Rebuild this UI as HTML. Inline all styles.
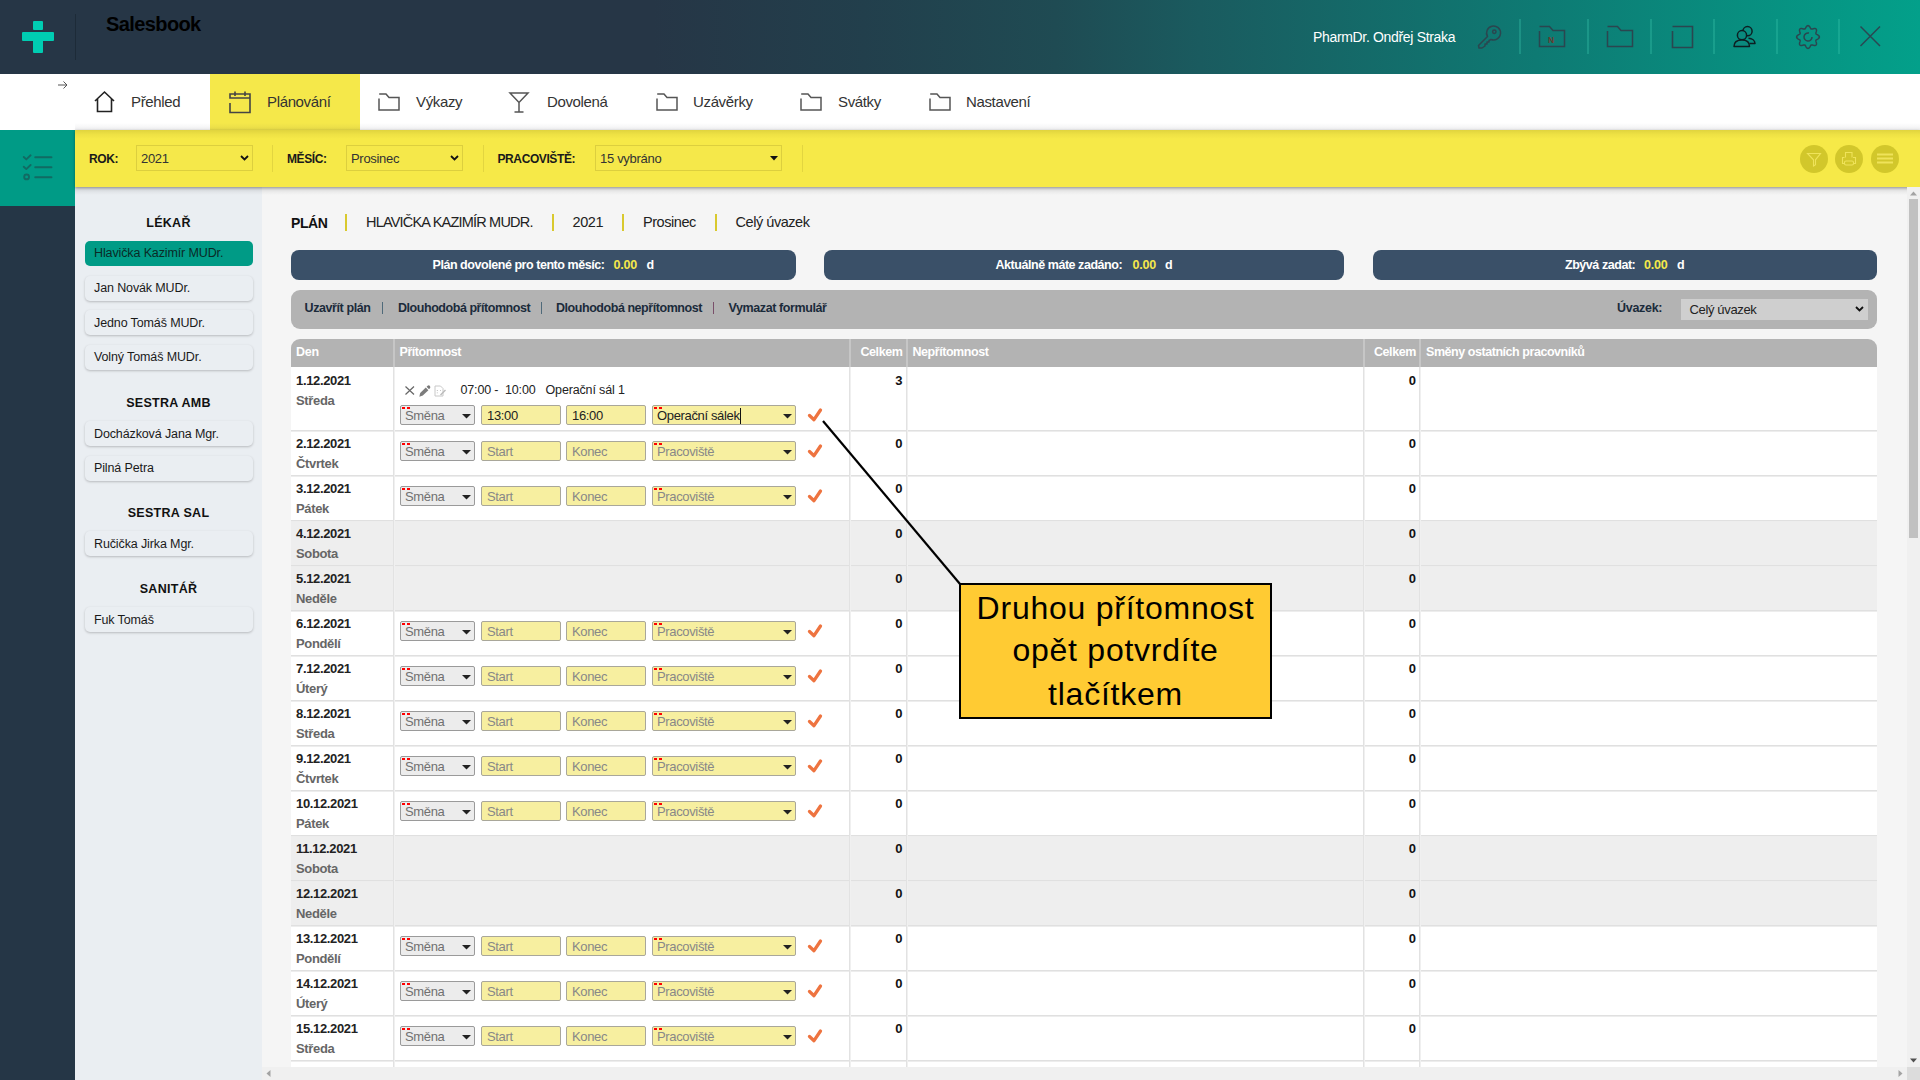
<!DOCTYPE html>
<html><head><meta charset="utf-8"><style>
*{box-sizing:border-box;margin:0;padding:0}
html,body{width:1920px;height:1080px;overflow:hidden;background:#f5f5f5;font-family:"Liberation Sans",sans-serif;color:#222}
.a{position:absolute}
.t{position:absolute;white-space:pre}
svg{position:absolute;overflow:visible}
</style></head><body>
<div class="a" style="left:0;top:0;width:1920px;height:74px;background:linear-gradient(to right,#263646 0%,#263646 34%,#223f4c 45%,#1f4b53 55%,#1a5b5f 62.5%,#0e7a73 80%,#03a08a 100%)"></div>
<div class="a" style="left:33px;top:20.5px;width:9.5px;height:9.5px;border-radius:1px;background:#00cdb2"></div>
<div class="a" style="left:22px;top:32px;width:31.8px;height:9.3px;border-radius:1px;background:#00cdb2"></div>
<div class="a" style="left:33px;top:40px;width:9.5px;height:12.5px;border-radius:0 0 1px 1px;background:#00cdb2"></div>
<div class="a" style="left:75px;top:14px;width:1px;height:46px;background:#1d2b38"></div>
<div class="t" style="left:106px;top:14.07px;font-size:20px;line-height:20px;font-weight:700;color:#000;letter-spacing:-0.6px;">Salesbook</div>
<div class="t" style="left:1313px;top:29.65px;font-size:14px;line-height:14px;font-weight:400;color:#fff;letter-spacing:-0.33px;">PharmDr. Ondřej Straka</div>
<div class="a" style="left:1519px;top:19px;width:2px;height:35px;background:rgba(60,200,175,.32)"></div>
<div class="a" style="left:1587px;top:19px;width:2px;height:35px;background:rgba(60,200,175,.32)"></div>
<div class="a" style="left:1650px;top:19px;width:2px;height:35px;background:rgba(60,200,175,.32)"></div>
<div class="a" style="left:1713px;top:19px;width:2px;height:35px;background:rgba(60,200,175,.32)"></div>
<div class="a" style="left:1776px;top:19px;width:2px;height:35px;background:rgba(60,200,175,.32)"></div>
<div class="a" style="left:1838px;top:19px;width:2px;height:35px;background:rgba(60,200,175,.32)"></div>
<svg style="left:1476px;top:24px" width="26" height="26" viewBox="0 0 26 26" fill="none" stroke="#2b464f" stroke-width="1.5" stroke-linejoin="round"><path d="M11.5 12.5 A7 7 0 1 1 15 15.5 L13 16.5 L13 18 L11 18 L11 20 L9 20 L9 22 L6 24 L3 24 L2.5 21.5 L11.5 12.5 Z"/><circle cx="18.3" cy="7.8" r="1.7"/></svg>
<svg style="left:1538px;top:25px" width="28" height="23" viewBox="0 0 28 23" fill="none" stroke="#2b464f" stroke-width="1.5"><path d="M1.5 6 V21.5 H26.5 V5.5 H15 L11.5 1.5 H1.5"/><text x="10" y="17.5" font-size="8.5" font-family="Liberation Sans" font-weight="700" fill="#6b3a2e" stroke="none">N</text></svg>
<svg style="left:1606px;top:25px" width="28" height="23" viewBox="0 0 28 23" fill="none" stroke="#2b464f" stroke-width="1.5"><path d="M1.5 6 V21.5 H26.5 V5.5 H15 L11.5 1.5 H1.5"/></svg>
<svg style="left:1671px;top:25px" width="23" height="24" viewBox="0 0 23 24" fill="none" stroke="#2b464f" stroke-width="1.6"><path d="M1.5 6 V22.5 H21.5 V1.5 H1.5"/></svg>
<svg style="left:1733px;top:25px" width="24" height="23" viewBox="0 0 24 23" fill="none" stroke="#0d1f22" stroke-width="1.5" stroke-linejoin="round"><circle cx="14.5" cy="6.2" r="4.6"/><path d="M15.5 13.3 C19 13.5 22 15.5 22 18.5 L16.5 18.5"/><circle cx="9" cy="10.2" r="4.6" fill="#0a8a7e"/><path d="M1 21.5 C1 17.5 3.5 15 9 15 C14 15 16.5 17.5 16.5 21.5 Z" fill="#0a8a7e"/></svg>
<svg style="left:1796px;top:25px" width="24" height="24" viewBox="0 0 24 24" fill="none" stroke="#2b464f" stroke-width="1.5"><path d="M23.40 12.00 L23.34 12.40 L23.16 12.78 L22.88 13.14 L22.51 13.48 L22.09 13.78 L21.64 14.05 L21.19 14.29 L20.78 14.52 L20.43 14.74 L20.16 14.97 L19.98 15.22 L19.88 15.51 L19.88 15.84 L19.94 16.22 L20.05 16.65 L20.19 17.12 L20.33 17.62 L20.44 18.13 L20.50 18.64 L20.48 19.12 L20.38 19.55 L20.19 19.91 L19.91 20.19 L19.55 20.38 L19.12 20.48 L18.64 20.50 L18.13 20.44 L17.62 20.33 L17.12 20.19 L16.65 20.05 L16.22 19.94 L15.84 19.88 L15.51 19.88 L15.22 19.98 L14.97 20.16 L14.74 20.43 L14.52 20.78 L14.29 21.19 L14.05 21.64 L13.78 22.09 L13.48 22.51 L13.14 22.88 L12.78 23.16 L12.40 23.34 L12.00 23.40 L11.60 23.34 L11.22 23.16 L10.86 22.88 L10.52 22.51 L10.22 22.09 L9.95 21.64 L9.71 21.19 L9.48 20.78 L9.26 20.43 L9.03 20.16 L8.78 19.98 L8.49 19.88 L8.16 19.88 L7.78 19.94 L7.35 20.05 L6.88 20.19 L6.38 20.33 L5.87 20.44 L5.36 20.50 L4.88 20.48 L4.45 20.38 L4.09 20.19 L3.81 19.91 L3.62 19.55 L3.52 19.12 L3.50 18.64 L3.56 18.13 L3.67 17.62 L3.81 17.12 L3.95 16.65 L4.06 16.22 L4.12 15.84 L4.12 15.51 L4.02 15.22 L3.84 14.97 L3.57 14.74 L3.22 14.52 L2.81 14.29 L2.36 14.05 L1.91 13.78 L1.49 13.48 L1.12 13.14 L0.84 12.78 L0.66 12.40 L0.60 12.00 L0.66 11.60 L0.84 11.22 L1.12 10.86 L1.49 10.52 L1.91 10.22 L2.36 9.95 L2.81 9.71 L3.22 9.48 L3.57 9.26 L3.84 9.03 L4.02 8.78 L4.12 8.49 L4.12 8.16 L4.06 7.78 L3.95 7.35 L3.81 6.88 L3.67 6.38 L3.56 5.87 L3.50 5.36 L3.52 4.88 L3.62 4.45 L3.81 4.09 L4.09 3.81 L4.45 3.62 L4.88 3.52 L5.36 3.50 L5.87 3.56 L6.38 3.67 L6.88 3.81 L7.35 3.95 L7.78 4.06 L8.16 4.12 L8.49 4.12 L8.78 4.02 L9.03 3.84 L9.26 3.57 L9.48 3.22 L9.71 2.81 L9.95 2.36 L10.22 1.91 L10.52 1.49 L10.86 1.12 L11.22 0.84 L11.60 0.66 L12.00 0.60 L12.40 0.66 L12.78 0.84 L13.14 1.12 L13.48 1.49 L13.78 1.91 L14.05 2.36 L14.29 2.81 L14.52 3.22 L14.74 3.57 L14.97 3.84 L15.22 4.02 L15.51 4.12 L15.84 4.12 L16.22 4.06 L16.65 3.95 L17.12 3.81 L17.62 3.67 L18.13 3.56 L18.64 3.50 L19.12 3.52 L19.55 3.62 L19.91 3.81 L20.19 4.09 L20.38 4.45 L20.48 4.88 L20.50 5.36 L20.44 5.87 L20.33 6.38 L20.19 6.88 L20.05 7.35 L19.94 7.78 L19.88 8.16 L19.88 8.49 L19.98 8.78 L20.16 9.03 L20.43 9.26 L20.78 9.48 L21.19 9.71 L21.64 9.95 L22.09 10.22 L22.51 10.52 L22.88 10.86 L23.16 11.22 L23.34 11.60 L23.40 12.00 Z"/><path d="M16 12 A4 4 0 1 1 13 8.1"/></svg>
<svg style="left:1860px;top:26px" width="21" height="21" viewBox="0 0 21 21" fill="none" stroke="#2a4852" stroke-width="1.5"><path d="M0.5 0.5 L20 20 M20 0.5 L0.5 20"/></svg>
<div class="a" style="left:0;top:74px;width:1920px;height:56px;background:#fff"></div>
<div class="a" style="left:210px;top:74px;width:150px;height:56px;background:#f5e84a"></div>
<svg style="left:57px;top:80px" width="12" height="10" viewBox="0 0 12 10" fill="none" stroke="#555" stroke-width="1"><path d="M1 5 H10 M6.5 1.5 L10 5 L6.5 8.5"/></svg>
<div class="a" style="left:75px;top:123px;width:1845px;height:7px;background:linear-gradient(rgba(0,0,0,0),rgba(40,40,60,.07))"></div>
<svg style="left:94px;top:91px" width="21" height="22" viewBox="0 0 21 22" fill="none" stroke="#222" stroke-width="1.6"><path d="M1 10 L10.5 1 L20 10 M3.5 8 V20.5 H17.5 V8"/></svg>
<div class="t" style="left:131px;top:94.00px;font-size:15px;line-height:15px;font-weight:400;color:#333;letter-spacing:-0.35px;">Přehled</div>
<svg style="left:229px;top:91px" width="22" height="22" viewBox="0 0 22 22" fill="none" stroke="#444" stroke-width="1.6"><path d="M1 12 V21.5 H21 V3 H1 V7 H21 M6 0.5 V5 M16 0.5 V5"/></svg>
<div class="t" style="left:267px;top:94.00px;font-size:15px;line-height:15px;font-weight:400;color:#333;letter-spacing:-0.35px;">Plánování</div>
<svg style="left:378px;top:93px" width="22" height="18" viewBox="0 0 22 18" fill="none" stroke="#555" stroke-width="1.5"><path d="M1 5.5 V17 H21 V4.5 H11 L8 1 H1.2"/></svg>
<div class="t" style="left:416px;top:94.00px;font-size:15px;line-height:15px;font-weight:400;color:#333;letter-spacing:-0.35px;">Výkazy</div>
<svg style="left:509px;top:92px" width="20" height="21" viewBox="0 0 20 21" fill="none" stroke="#555" stroke-width="1.5"><path d="M1 1 H19 L10 10.5 Z M10 10.5 V20 M5.5 20 H14.5"/></svg>
<div class="t" style="left:547px;top:94.00px;font-size:15px;line-height:15px;font-weight:400;color:#333;letter-spacing:-0.35px;">Dovolená</div>
<svg style="left:656px;top:93px" width="22" height="18" viewBox="0 0 22 18" fill="none" stroke="#555" stroke-width="1.5"><path d="M1 5.5 V17 H21 V4.5 H11 L8 1 H1.2"/></svg>
<div class="t" style="left:693px;top:94.00px;font-size:15px;line-height:15px;font-weight:400;color:#333;letter-spacing:-0.35px;">Uzávěrky</div>
<svg style="left:800px;top:93px" width="22" height="18" viewBox="0 0 22 18" fill="none" stroke="#555" stroke-width="1.5"><path d="M1 5.5 V17 H21 V4.5 H11 L8 1 H1.2"/></svg>
<div class="t" style="left:838px;top:94.00px;font-size:15px;line-height:15px;font-weight:400;color:#333;letter-spacing:-0.35px;">Svátky</div>
<svg style="left:929px;top:93px" width="22" height="18" viewBox="0 0 22 18" fill="none" stroke="#555" stroke-width="1.5"><path d="M1 5.5 V17 H21 V4.5 H11 L8 1 H1.2"/></svg>
<div class="t" style="left:966px;top:94.00px;font-size:15px;line-height:15px;font-weight:400;color:#333;letter-spacing:-0.35px;">Nastavení</div>
<div class="a" style="left:0;top:130px;width:75px;height:950px;background:#253646"></div>
<div class="a" style="left:0;top:130px;width:75px;height:76px;background:#009b86"></div>
<svg style="left:20px;top:150px" width="34" height="32" viewBox="0 0 34 32" fill="none" stroke="#116b63" stroke-width="1.9" stroke-linecap="round" stroke-linejoin="round"><path d="M3.75 7 L6.3 9.4 L10.6 5.3 M15.2 7.3 H31.5 M3.75 16.7 L6.3 19.1 L10.6 15 M15.2 17.25 H31.5 M15.2 27.2 H31.5"/><circle cx="6.6" cy="26.9" r="2.4"/></svg>
<div class="a" style="left:75px;top:187px;width:187px;height:893px;background:#eaeef2"></div>
<div class="a" style="left:75px;top:187px;width:1845px;height:8px;background:linear-gradient(rgba(0,0,0,.10),rgba(0,0,0,0))"></div>
<div class="a" style="left:75px;top:130px;width:1845px;height:57px;background:#f6e948;box-shadow:0 1px 3px rgba(0,0,0,.35)"></div>
<div class="a" style="left:75px;top:130px;width:1845px;height:9px;background:linear-gradient(rgba(90,80,0,.14),rgba(90,80,0,.05) 50%,rgba(0,0,0,0))"></div>
<div class="t" style="left:89px;top:152.84px;font-size:12px;line-height:12px;font-weight:700;color:#1a1a1a;letter-spacing:-0.4px;">ROK:</div>
<div class="a" style="left:136px;top:145px;width:117px;height:26px;border:1px solid #dccf3e;background:#f5e84a"></div>
<div class="t" style="left:141px;top:152.00px;font-size:13px;line-height:13px;font-weight:400;color:#333;letter-spacing:-0.3px;">2021</div>
<svg style="left:240px;top:155px" width="9" height="6" viewBox="0 0 9 6" fill="none" stroke="#111" stroke-width="1.8"><path d="M1 1 L4.5 4.5 L8 1"/></svg>
<div class="a" style="left:272px;top:145px;width:1px;height:27px;background:#e2d540"></div>
<div class="t" style="left:287px;top:152.84px;font-size:12px;line-height:12px;font-weight:700;color:#1a1a1a;letter-spacing:-0.4px;">MĚSÍC:</div>
<div class="a" style="left:346px;top:145px;width:117px;height:26px;border:1px solid #dccf3e;background:#f5e84a"></div>
<div class="t" style="left:351px;top:152.00px;font-size:13px;line-height:13px;font-weight:400;color:#333;letter-spacing:-0.3px;">Prosinec</div>
<svg style="left:450px;top:155px" width="9" height="6" viewBox="0 0 9 6" fill="none" stroke="#111" stroke-width="1.8"><path d="M1 1 L4.5 4.5 L8 1"/></svg>
<div class="a" style="left:483px;top:145px;width:1px;height:27px;background:#e2d540"></div>
<div class="t" style="left:497.5px;top:152.84px;font-size:12px;line-height:12px;font-weight:700;color:#1a1a1a;letter-spacing:-0.4px;">PRACOVIŠTĚ:</div>
<div class="a" style="left:595px;top:145px;width:187px;height:26px;border:1px solid #dccf3e;background:#f5e84a"></div>
<div class="t" style="left:600px;top:152.00px;font-size:13px;line-height:13px;font-weight:400;color:#333;letter-spacing:-0.3px;">15 vybráno</div>
<svg style="left:770px;top:156px" width="8" height="5" viewBox="0 0 8 5"><path d="M0 0 H8 L4 4.5 Z" fill="#111"/></svg>
<div class="a" style="left:802px;top:145px;width:1px;height:27px;background:#e2d540"></div>
<div class="a" style="left:1799.5px;top:144.5px;width:28.5px;height:28.5px;border-radius:50%;background:#d2c72b"></div>
<div class="a" style="left:1834.5px;top:144.5px;width:28.5px;height:28.5px;border-radius:50%;background:#d2c72b"></div>
<div class="a" style="left:1870.5px;top:144.5px;width:28.5px;height:28.5px;border-radius:50%;background:#d2c72b"></div>
<svg style="left:1806px;top:152px" width="16" height="15" viewBox="0 0 16 15" fill="none" stroke="#efe35a" stroke-width="1.1"><path d="M1.5 1.5 H14.5 L9.5 7.8 V12.8 L7.5 14 V7.8 Z"/></svg>
<svg style="left:1841px;top:151px" width="16" height="16" viewBox="0 0 16 16" fill="none" stroke="#efe35a" stroke-width="1.1"><path d="M4.5 6.5 V1.5 H11 V6.5 M3.5 6.5 H1.5 V12.5 H3.5 M12 6.5 H14.5 V12.5 H12"/><rect x="3.5" y="10" width="9" height="4" rx="1.5"/></svg>
<svg style="left:1876px;top:152px" width="18" height="14" viewBox="0 0 18 14" fill="none" stroke="#efe35a" stroke-width="1.8"><path d="M1 2.5 H17 M1 6.5 H17 M1 10.5 H17"/></svg>
<div class="t" style="left:168.5px;top:216.92px;font-size:12.5px;line-height:12.5px;font-weight:700;color:#111;letter-spacing:0.3px;transform:translateX(-50%);">LÉKAŘ</div>
<div class="a" style="left:85px;top:241px;width:168px;height:25px;border-radius:5px;background:#009b86;"></div>
<div class="t" style="left:94px;top:246.92px;font-size:12.5px;line-height:12.5px;font-weight:400;color:#0a2a26;letter-spacing:-0.12px;">Hlavička Kazimír MUDr.</div>
<div class="a" style="left:85px;top:275.5px;width:168px;height:25px;border-radius:5px;background:#eaeef2;box-shadow:0 1px 2.5px rgba(0,0,0,.22);"></div>
<div class="t" style="left:94px;top:282.42px;font-size:12.5px;line-height:12.5px;font-weight:400;color:#1a1a1a;letter-spacing:-0.12px;">Jan Novák MUDr.</div>
<div class="a" style="left:85px;top:310px;width:168px;height:25px;border-radius:5px;background:#eaeef2;box-shadow:0 1px 2.5px rgba(0,0,0,.22);"></div>
<div class="t" style="left:94px;top:316.92px;font-size:12.5px;line-height:12.5px;font-weight:400;color:#1a1a1a;letter-spacing:-0.12px;">Jedno Tomáš MUDr.</div>
<div class="a" style="left:85px;top:344.5px;width:168px;height:25px;border-radius:5px;background:#eaeef2;box-shadow:0 1px 2.5px rgba(0,0,0,.22);"></div>
<div class="t" style="left:94px;top:351.42px;font-size:12.5px;line-height:12.5px;font-weight:400;color:#1a1a1a;letter-spacing:-0.12px;">Volný Tomáš MUDr.</div>
<div class="t" style="left:168.5px;top:397.42px;font-size:12.5px;line-height:12.5px;font-weight:700;color:#111;letter-spacing:0.3px;transform:translateX(-50%);">SESTRA AMB</div>
<div class="a" style="left:85px;top:421px;width:168px;height:25px;border-radius:5px;background:#eaeef2;box-shadow:0 1px 2.5px rgba(0,0,0,.22);"></div>
<div class="t" style="left:94px;top:427.92px;font-size:12.5px;line-height:12.5px;font-weight:400;color:#1a1a1a;letter-spacing:-0.12px;">Docházková Jana Mgr.</div>
<div class="a" style="left:85px;top:455.5px;width:168px;height:25px;border-radius:5px;background:#eaeef2;box-shadow:0 1px 2.5px rgba(0,0,0,.22);"></div>
<div class="t" style="left:94px;top:462.42px;font-size:12.5px;line-height:12.5px;font-weight:400;color:#1a1a1a;letter-spacing:-0.12px;">Pilná Petra</div>
<div class="t" style="left:168.5px;top:507.42px;font-size:12.5px;line-height:12.5px;font-weight:700;color:#111;letter-spacing:0.3px;transform:translateX(-50%);">SESTRA SAL</div>
<div class="a" style="left:85px;top:531px;width:168px;height:25px;border-radius:5px;background:#eaeef2;box-shadow:0 1px 2.5px rgba(0,0,0,.22);"></div>
<div class="t" style="left:94px;top:537.92px;font-size:12.5px;line-height:12.5px;font-weight:400;color:#1a1a1a;letter-spacing:-0.12px;">Ručička Jirka Mgr.</div>
<div class="t" style="left:168.5px;top:582.92px;font-size:12.5px;line-height:12.5px;font-weight:700;color:#111;letter-spacing:0.3px;transform:translateX(-50%);">SANITÁŘ</div>
<div class="a" style="left:85px;top:607px;width:168px;height:25px;border-radius:5px;background:#eaeef2;box-shadow:0 1px 2.5px rgba(0,0,0,.22);"></div>
<div class="t" style="left:94px;top:613.92px;font-size:12.5px;line-height:12.5px;font-weight:400;color:#1a1a1a;letter-spacing:-0.12px;">Fuk Tomáš</div>
<div class="t" style="left:291px;top:215.65px;font-size:14px;line-height:14px;font-weight:700;color:#111;letter-spacing:-0.45px;">PLÁN</div>
<div class="a" style="left:345px;top:214px;width:2px;height:17px;background:#d9c92e"></div>
<div class="a" style="left:552px;top:214px;width:2px;height:17px;background:#d9c92e"></div>
<div class="a" style="left:622px;top:214px;width:2px;height:17px;background:#d9c92e"></div>
<div class="a" style="left:715px;top:214px;width:2px;height:17px;background:#d9c92e"></div>
<div class="t" style="left:366px;top:215.23px;font-size:14.5px;line-height:14.5px;font-weight:400;color:#222;letter-spacing:-0.8px;">HLAVIČKA KAZIMÍR MUDR.</div>
<div class="t" style="left:572.5px;top:215.23px;font-size:14.5px;line-height:14.5px;font-weight:400;color:#222;letter-spacing:-0.4px;">2021</div>
<div class="t" style="left:643px;top:215.23px;font-size:14.5px;line-height:14.5px;font-weight:400;color:#222;letter-spacing:-0.45px;">Prosinec</div>
<div class="t" style="left:735.5px;top:215.23px;font-size:14.5px;line-height:14.5px;font-weight:400;color:#222;letter-spacing:-0.45px;">Celý úvazek</div>
<div class="a" style="left:291px;top:250px;width:505px;height:30px;border-radius:8px;background:#3a5068"></div>
<div class="t" style="left:432.5px;top:259.12px;font-size:12.5px;line-height:12.5px;font-weight:700;color:#fff;letter-spacing:-0.45px;">Plán dovolené pro tento měsíc:</div>
<div class="t" style="left:613.5px;top:259.12px;font-size:12.5px;line-height:12.5px;font-weight:700;color:#f5e84a;letter-spacing:-0.2px;">0.00</div>
<div class="t" style="left:646.5px;top:259.12px;font-size:12.5px;line-height:12.5px;font-weight:700;color:#fff;">d</div>
<div class="a" style="left:823.5px;top:250px;width:520.5px;height:30px;border-radius:8px;background:#3a5068"></div>
<div class="t" style="left:995.5px;top:259.12px;font-size:12.5px;line-height:12.5px;font-weight:700;color:#fff;letter-spacing:-0.45px;">Aktuálně máte zadáno:</div>
<div class="t" style="left:1132.5px;top:259.12px;font-size:12.5px;line-height:12.5px;font-weight:700;color:#f5e84a;letter-spacing:-0.2px;">0.00</div>
<div class="t" style="left:1165px;top:259.12px;font-size:12.5px;line-height:12.5px;font-weight:700;color:#fff;">d</div>
<div class="a" style="left:1372.5px;top:250px;width:504.5px;height:30px;border-radius:8px;background:#3a5068"></div>
<div class="t" style="left:1565px;top:259.12px;font-size:12.5px;line-height:12.5px;font-weight:700;color:#fff;letter-spacing:-0.45px;">Zbývá zadat:</div>
<div class="t" style="left:1644px;top:259.12px;font-size:12.5px;line-height:12.5px;font-weight:700;color:#f5e84a;letter-spacing:-0.2px;">0.00</div>
<div class="t" style="left:1677px;top:259.12px;font-size:12.5px;line-height:12.5px;font-weight:700;color:#fff;">d</div>
<div class="a" style="left:291px;top:290px;width:1586px;height:39px;border-radius:9px;background:#b3b3b3"></div>
<div class="t" style="left:304.5px;top:302.42px;font-size:12.5px;line-height:12.5px;font-weight:700;color:#1b2b3b;letter-spacing:-0.4px;">Uzavřít plán</div>
<div class="t" style="left:398px;top:302.42px;font-size:12.5px;line-height:12.5px;font-weight:700;color:#1b2b3b;letter-spacing:-0.45px;">Dlouhodobá přítomnost</div>
<div class="t" style="left:556px;top:302.42px;font-size:12.5px;line-height:12.5px;font-weight:700;color:#1b2b3b;letter-spacing:-0.45px;">Dlouhodobá nepřítomnost</div>
<div class="t" style="left:728.5px;top:302.42px;font-size:12.5px;line-height:12.5px;font-weight:700;color:#1b2b3b;letter-spacing:-0.4px;">Vymazat formulář</div>
<div class="a" style="left:382px;top:302px;width:1px;height:12px;background:#4f6a7a"></div>
<div class="a" style="left:540.5px;top:302px;width:1px;height:12px;background:#4f6a7a"></div>
<div class="a" style="left:712.5px;top:302px;width:1px;height:12px;background:#7a4f6a"></div>
<div class="t" style="left:1617px;top:301.92px;font-size:12.5px;line-height:12.5px;font-weight:700;color:#1b2b3b;letter-spacing:-0.3px;">Úvazek:</div>
<div class="a" style="left:1681px;top:299px;width:187px;height:21px;background:#cfcfcf"></div>
<div class="t" style="left:1689.5px;top:302.70px;font-size:13px;line-height:13px;font-weight:400;color:#222;letter-spacing:-0.35px;">Celý úvazek</div>
<svg style="left:1855px;top:306px" width="9" height="6" viewBox="0 0 9 6" fill="none" stroke="#111" stroke-width="1.8"><path d="M1 1 L4.5 4.5 L8 1"/></svg>
<div class="a" style="left:291px;top:339px;width:1586px;height:28px;border-radius:9px 9px 0 0;background:#b3b3b3"></div>
<div class="a" style="left:393px;top:339px;width:2px;height:28px;background:#c6c6c6"></div>
<div class="a" style="left:849px;top:339px;width:2px;height:28px;background:#c6c6c6"></div>
<div class="a" style="left:906px;top:339px;width:2px;height:28px;background:#c6c6c6"></div>
<div class="a" style="left:1363px;top:339px;width:2px;height:28px;background:#c6c6c6"></div>
<div class="a" style="left:1419px;top:339px;width:2px;height:28px;background:#c6c6c6"></div>
<div class="t" style="left:296px;top:346.42px;font-size:12.5px;line-height:12.5px;font-weight:700;color:#fff;letter-spacing:-0.3px;">Den</div>
<div class="t" style="left:399.5px;top:346.42px;font-size:12.5px;line-height:12.5px;font-weight:700;color:#fff;letter-spacing:-0.45px;">Přítomnost</div>
<div class="t" style="right:1017.5px;top:346.42px;font-size:12.5px;line-height:12.5px;font-weight:700;color:#fff;letter-spacing:-0.4px;">Celkem</div>
<div class="t" style="left:912.5px;top:346.42px;font-size:12.5px;line-height:12.5px;font-weight:700;color:#fff;letter-spacing:-0.45px;">Nepřítomnost</div>
<div class="t" style="right:504px;top:346.42px;font-size:12.5px;line-height:12.5px;font-weight:700;color:#fff;letter-spacing:-0.4px;">Celkem</div>
<div class="t" style="left:1426px;top:346.42px;font-size:12.5px;line-height:12.5px;font-weight:700;color:#fff;letter-spacing:-0.45px;">Směny ostatních pracovníků</div>
<div class="a" style="left:291px;top:367px;width:1586px;height:63px;background:#ffffff"></div>
<div class="a" style="left:291px;top:430px;width:1586px;height:45px;background:#ffffff"></div>
<div class="a" style="left:291px;top:475px;width:1586px;height:45px;background:#ffffff"></div>
<div class="a" style="left:291px;top:520px;width:1586px;height:45px;background:#eeeeee"></div>
<div class="a" style="left:291px;top:565px;width:1586px;height:45px;background:#eeeeee"></div>
<div class="a" style="left:291px;top:610px;width:1586px;height:45px;background:#ffffff"></div>
<div class="a" style="left:291px;top:655px;width:1586px;height:45px;background:#ffffff"></div>
<div class="a" style="left:291px;top:700px;width:1586px;height:45px;background:#ffffff"></div>
<div class="a" style="left:291px;top:745px;width:1586px;height:45px;background:#ffffff"></div>
<div class="a" style="left:291px;top:790px;width:1586px;height:45px;background:#ffffff"></div>
<div class="a" style="left:291px;top:835px;width:1586px;height:45px;background:#eeeeee"></div>
<div class="a" style="left:291px;top:880px;width:1586px;height:45px;background:#eeeeee"></div>
<div class="a" style="left:291px;top:925px;width:1586px;height:45px;background:#ffffff"></div>
<div class="a" style="left:291px;top:970px;width:1586px;height:45px;background:#ffffff"></div>
<div class="a" style="left:291px;top:1015px;width:1586px;height:45px;background:#ffffff"></div>
<div class="a" style="left:291px;top:1060px;width:1586px;height:7px;background:#ffffff"></div>
<div class="a" style="left:291px;top:430px;width:1586px;height:1px;background:#e0e0e0"></div><div class="a" style="left:291px;top:431px;width:1586px;height:1px;background:#ededed"></div>
<div class="a" style="left:291px;top:475px;width:1586px;height:1px;background:#e0e0e0"></div><div class="a" style="left:291px;top:476px;width:1586px;height:1px;background:#ededed"></div>
<div class="a" style="left:291px;top:520px;width:1586px;height:1px;background:#e0e0e0"></div><div class="a" style="left:291px;top:521px;width:1586px;height:1px;background:#ededed"></div>
<div class="a" style="left:291px;top:565px;width:1586px;height:1px;background:#e0e0e0"></div><div class="a" style="left:291px;top:566px;width:1586px;height:1px;background:#ededed"></div>
<div class="a" style="left:291px;top:610px;width:1586px;height:1px;background:#e0e0e0"></div><div class="a" style="left:291px;top:611px;width:1586px;height:1px;background:#ededed"></div>
<div class="a" style="left:291px;top:655px;width:1586px;height:1px;background:#e0e0e0"></div><div class="a" style="left:291px;top:656px;width:1586px;height:1px;background:#ededed"></div>
<div class="a" style="left:291px;top:700px;width:1586px;height:1px;background:#e0e0e0"></div><div class="a" style="left:291px;top:701px;width:1586px;height:1px;background:#ededed"></div>
<div class="a" style="left:291px;top:745px;width:1586px;height:1px;background:#e0e0e0"></div><div class="a" style="left:291px;top:746px;width:1586px;height:1px;background:#ededed"></div>
<div class="a" style="left:291px;top:790px;width:1586px;height:1px;background:#e0e0e0"></div><div class="a" style="left:291px;top:791px;width:1586px;height:1px;background:#ededed"></div>
<div class="a" style="left:291px;top:835px;width:1586px;height:1px;background:#e0e0e0"></div><div class="a" style="left:291px;top:836px;width:1586px;height:1px;background:#ededed"></div>
<div class="a" style="left:291px;top:880px;width:1586px;height:1px;background:#e0e0e0"></div><div class="a" style="left:291px;top:881px;width:1586px;height:1px;background:#ededed"></div>
<div class="a" style="left:291px;top:925px;width:1586px;height:1px;background:#e0e0e0"></div><div class="a" style="left:291px;top:926px;width:1586px;height:1px;background:#ededed"></div>
<div class="a" style="left:291px;top:970px;width:1586px;height:1px;background:#e0e0e0"></div><div class="a" style="left:291px;top:971px;width:1586px;height:1px;background:#ededed"></div>
<div class="a" style="left:291px;top:1015px;width:1586px;height:1px;background:#e0e0e0"></div><div class="a" style="left:291px;top:1016px;width:1586px;height:1px;background:#ededed"></div>
<div class="a" style="left:291px;top:1060px;width:1586px;height:1px;background:#e0e0e0"></div><div class="a" style="left:291px;top:1061px;width:1586px;height:1px;background:#ededed"></div>
<div class="a" style="left:393px;top:367px;width:1px;height:700px;background:#e2e2e2"></div><div class="a" style="left:394px;top:367px;width:1px;height:700px;background:#f0f0f0"></div>
<div class="a" style="left:849px;top:367px;width:1px;height:700px;background:#e2e2e2"></div><div class="a" style="left:850px;top:367px;width:1px;height:700px;background:#f0f0f0"></div>
<div class="a" style="left:906px;top:367px;width:1px;height:700px;background:#e2e2e2"></div><div class="a" style="left:907px;top:367px;width:1px;height:700px;background:#f0f0f0"></div>
<div class="a" style="left:1363px;top:367px;width:1px;height:700px;background:#e2e2e2"></div><div class="a" style="left:1364px;top:367px;width:1px;height:700px;background:#f0f0f0"></div>
<div class="a" style="left:1419px;top:367px;width:1px;height:700px;background:#e2e2e2"></div><div class="a" style="left:1420px;top:367px;width:1px;height:700px;background:#f0f0f0"></div>
<div class="t" style="left:296px;top:374.10px;font-size:13px;line-height:13px;font-weight:700;color:#222;letter-spacing:-0.35px;">1.12.2021</div>
<div class="t" style="left:296px;top:393.50px;font-size:13px;line-height:13px;font-weight:700;color:#666;letter-spacing:-0.35px;">Středa</div>
<div class="t" style="right:1017.5px;top:373.70px;font-size:13px;line-height:13px;font-weight:700;color:#111;">3</div>
<div class="t" style="right:504px;top:373.70px;font-size:13px;line-height:13px;font-weight:700;color:#111;">0</div>
<svg style="left:405px;top:386px" width="10" height="9" viewBox="0 0 10 9" fill="none" stroke="#666" stroke-width="1.2"><path d="M0.5 0.5 L9 8.5 M9 0.5 L0.5 8.5"/></svg>
<svg style="left:419px;top:385px" width="12" height="12" viewBox="0 0 12 12"><path d="M0.3 11.8 L1.2 8 L6.8 2.6 L9.4 5.2 L3.8 10.6 Z" fill="#7c7c7c"/><path d="M7.6 1.8 L8.6 0.8 Q9.8 -0.2 10.9 0.9 Q11.9 2 10.9 3.2 L10 4.2 Z" fill="#777"/></svg>
<svg style="left:434px;top:385px" width="13" height="12" viewBox="0 0 13 12" fill="none" stroke="#c8c8c8" stroke-width="1"><path d="M1 1 H6.5 L9 3.5 V11 H1 Z M2.8 5.5 H4 M6 5.5 H7 M2.8 7.8 H3.8"/><path d="M6.5 10 L11.5 5" stroke="#bbb" stroke-width="1.4"/></svg>
<div class="t" style="left:460.5px;top:383.92px;font-size:12.5px;line-height:12.5px;font-weight:400;color:#222;letter-spacing:-0.15px;">07:00 -  10:00   Operační sál 1</div>
<div class="a" style="left:400px;top:405px;width:75px;height:20px;border:1px solid #9a9a9a;border-radius:2px;background:#ececec"></div>
<div class="a" style="left:402px;top:407px;width:3px;height:2px;background:#f00"></div><div class="a" style="left:407px;top:407px;width:3px;height:2px;background:#f00"></div>
<div class="t" style="left:405px;top:408.50px;font-size:13px;line-height:13px;font-weight:400;color:#707070;letter-spacing:-0.35px;">Směna</div>
<svg style="left:462px;top:414px" width="9" height="5" viewBox="0 0 9 5"><path d="M0 0 H9 L4.5 4.5 Z" fill="#222"/></svg>
<div class="a" style="left:481px;top:405px;width:80px;height:20px;border:1px solid #a9a79a;border-radius:2px;background:#f7efa0"></div>
<div class="t" style="left:487px;top:408.50px;font-size:13px;line-height:13px;font-weight:400;color:#222;letter-spacing:-0.35px;">13:00</div>
<div class="a" style="left:566px;top:405px;width:80px;height:20px;border:1px solid #a9a79a;border-radius:2px;background:#f7efa0"></div>
<div class="t" style="left:572px;top:408.50px;font-size:13px;line-height:13px;font-weight:400;color:#222;letter-spacing:-0.35px;">16:00</div>
<div class="a" style="left:652px;top:405px;width:144px;height:20px;border:1px solid #a9a79a;border-radius:2px;background:#f7efa0"></div>
<div class="a" style="left:654px;top:407px;width:3px;height:2px;background:#f00"></div><div class="a" style="left:659px;top:407px;width:3px;height:2px;background:#f00"></div>
<div class="t" style="left:657px;top:408.50px;font-size:13px;line-height:13px;font-weight:400;color:#222;letter-spacing:-0.35px;">Operační sálek</div>
<div class="a" style="left:740px;top:408px;width:1px;height:16px;background:#111"></div>
<svg style="left:783px;top:414px" width="9" height="5" viewBox="0 0 9 5"><path d="M0 0 H9 L4.5 4.5 Z" fill="#222"/></svg>
<svg style="left:805px;top:408px" width="20" height="16" viewBox="0 0 20 16" fill="none" stroke="#ee7440" stroke-width="3.3" stroke-linecap="round" stroke-linejoin="round"><path d="M4.5 7.5 L9 11.7 L15.5 2"/></svg>
<div class="t" style="left:296px;top:437.10px;font-size:13px;line-height:13px;font-weight:700;color:#222;letter-spacing:-0.35px;">2.12.2021</div>
<div class="t" style="left:296px;top:456.50px;font-size:13px;line-height:13px;font-weight:700;color:#666;letter-spacing:-0.35px;">Čtvrtek</div>
<div class="t" style="right:1017.5px;top:436.70px;font-size:13px;line-height:13px;font-weight:700;color:#111;">0</div>
<div class="t" style="right:504px;top:436.70px;font-size:13px;line-height:13px;font-weight:700;color:#111;">0</div>
<div class="a" style="left:400px;top:441px;width:75px;height:20px;border:1px solid #9a9a9a;border-radius:2px;background:#ececec"></div>
<div class="a" style="left:402px;top:443px;width:3px;height:2px;background:#f00"></div><div class="a" style="left:407px;top:443px;width:3px;height:2px;background:#f00"></div>
<div class="t" style="left:405px;top:444.50px;font-size:13px;line-height:13px;font-weight:400;color:#707070;letter-spacing:-0.35px;">Směna</div>
<svg style="left:462px;top:450px" width="9" height="5" viewBox="0 0 9 5"><path d="M0 0 H9 L4.5 4.5 Z" fill="#222"/></svg>
<div class="a" style="left:481px;top:441px;width:80px;height:20px;border:1px solid #a9a79a;border-radius:2px;background:#f7efa0"></div>
<div class="t" style="left:487px;top:444.50px;font-size:13px;line-height:13px;font-weight:400;color:#888;letter-spacing:-0.35px;">Start</div>
<div class="a" style="left:566px;top:441px;width:80px;height:20px;border:1px solid #a9a79a;border-radius:2px;background:#f7efa0"></div>
<div class="t" style="left:572px;top:444.50px;font-size:13px;line-height:13px;font-weight:400;color:#888;letter-spacing:-0.35px;">Konec</div>
<div class="a" style="left:652px;top:441px;width:144px;height:20px;border:1px solid #a9a79a;border-radius:2px;background:#f7efa0"></div>
<div class="a" style="left:654px;top:443px;width:3px;height:2px;background:#f00"></div><div class="a" style="left:659px;top:443px;width:3px;height:2px;background:#f00"></div>
<div class="t" style="left:657px;top:444.50px;font-size:13px;line-height:13px;font-weight:400;color:#888;letter-spacing:-0.35px;">Pracoviště</div>
<svg style="left:783px;top:450px" width="9" height="5" viewBox="0 0 9 5"><path d="M0 0 H9 L4.5 4.5 Z" fill="#222"/></svg>
<svg style="left:805px;top:444px" width="20" height="16" viewBox="0 0 20 16" fill="none" stroke="#ee7440" stroke-width="3.3" stroke-linecap="round" stroke-linejoin="round"><path d="M4.5 7.5 L9 11.7 L15.5 2"/></svg>
<div class="t" style="left:296px;top:482.10px;font-size:13px;line-height:13px;font-weight:700;color:#222;letter-spacing:-0.35px;">3.12.2021</div>
<div class="t" style="left:296px;top:501.50px;font-size:13px;line-height:13px;font-weight:700;color:#666;letter-spacing:-0.35px;">Pátek</div>
<div class="t" style="right:1017.5px;top:481.70px;font-size:13px;line-height:13px;font-weight:700;color:#111;">0</div>
<div class="t" style="right:504px;top:481.70px;font-size:13px;line-height:13px;font-weight:700;color:#111;">0</div>
<div class="a" style="left:400px;top:486px;width:75px;height:20px;border:1px solid #9a9a9a;border-radius:2px;background:#ececec"></div>
<div class="a" style="left:402px;top:488px;width:3px;height:2px;background:#f00"></div><div class="a" style="left:407px;top:488px;width:3px;height:2px;background:#f00"></div>
<div class="t" style="left:405px;top:489.50px;font-size:13px;line-height:13px;font-weight:400;color:#707070;letter-spacing:-0.35px;">Směna</div>
<svg style="left:462px;top:495px" width="9" height="5" viewBox="0 0 9 5"><path d="M0 0 H9 L4.5 4.5 Z" fill="#222"/></svg>
<div class="a" style="left:481px;top:486px;width:80px;height:20px;border:1px solid #a9a79a;border-radius:2px;background:#f7efa0"></div>
<div class="t" style="left:487px;top:489.50px;font-size:13px;line-height:13px;font-weight:400;color:#888;letter-spacing:-0.35px;">Start</div>
<div class="a" style="left:566px;top:486px;width:80px;height:20px;border:1px solid #a9a79a;border-radius:2px;background:#f7efa0"></div>
<div class="t" style="left:572px;top:489.50px;font-size:13px;line-height:13px;font-weight:400;color:#888;letter-spacing:-0.35px;">Konec</div>
<div class="a" style="left:652px;top:486px;width:144px;height:20px;border:1px solid #a9a79a;border-radius:2px;background:#f7efa0"></div>
<div class="a" style="left:654px;top:488px;width:3px;height:2px;background:#f00"></div><div class="a" style="left:659px;top:488px;width:3px;height:2px;background:#f00"></div>
<div class="t" style="left:657px;top:489.50px;font-size:13px;line-height:13px;font-weight:400;color:#888;letter-spacing:-0.35px;">Pracoviště</div>
<svg style="left:783px;top:495px" width="9" height="5" viewBox="0 0 9 5"><path d="M0 0 H9 L4.5 4.5 Z" fill="#222"/></svg>
<svg style="left:805px;top:489px" width="20" height="16" viewBox="0 0 20 16" fill="none" stroke="#ee7440" stroke-width="3.3" stroke-linecap="round" stroke-linejoin="round"><path d="M4.5 7.5 L9 11.7 L15.5 2"/></svg>
<div class="t" style="left:296px;top:527.10px;font-size:13px;line-height:13px;font-weight:700;color:#222;letter-spacing:-0.35px;">4.12.2021</div>
<div class="t" style="left:296px;top:546.50px;font-size:13px;line-height:13px;font-weight:700;color:#666;letter-spacing:-0.35px;">Sobota</div>
<div class="t" style="right:1017.5px;top:526.70px;font-size:13px;line-height:13px;font-weight:700;color:#111;">0</div>
<div class="t" style="right:504px;top:526.70px;font-size:13px;line-height:13px;font-weight:700;color:#111;">0</div>
<div class="t" style="left:296px;top:572.10px;font-size:13px;line-height:13px;font-weight:700;color:#222;letter-spacing:-0.35px;">5.12.2021</div>
<div class="t" style="left:296px;top:591.50px;font-size:13px;line-height:13px;font-weight:700;color:#666;letter-spacing:-0.35px;">Neděle</div>
<div class="t" style="right:1017.5px;top:571.70px;font-size:13px;line-height:13px;font-weight:700;color:#111;">0</div>
<div class="t" style="right:504px;top:571.70px;font-size:13px;line-height:13px;font-weight:700;color:#111;">0</div>
<div class="t" style="left:296px;top:617.10px;font-size:13px;line-height:13px;font-weight:700;color:#222;letter-spacing:-0.35px;">6.12.2021</div>
<div class="t" style="left:296px;top:636.50px;font-size:13px;line-height:13px;font-weight:700;color:#666;letter-spacing:-0.35px;">Pondělí</div>
<div class="t" style="right:1017.5px;top:616.70px;font-size:13px;line-height:13px;font-weight:700;color:#111;">0</div>
<div class="t" style="right:504px;top:616.70px;font-size:13px;line-height:13px;font-weight:700;color:#111;">0</div>
<div class="a" style="left:400px;top:621px;width:75px;height:20px;border:1px solid #9a9a9a;border-radius:2px;background:#ececec"></div>
<div class="a" style="left:402px;top:623px;width:3px;height:2px;background:#f00"></div><div class="a" style="left:407px;top:623px;width:3px;height:2px;background:#f00"></div>
<div class="t" style="left:405px;top:624.50px;font-size:13px;line-height:13px;font-weight:400;color:#707070;letter-spacing:-0.35px;">Směna</div>
<svg style="left:462px;top:630px" width="9" height="5" viewBox="0 0 9 5"><path d="M0 0 H9 L4.5 4.5 Z" fill="#222"/></svg>
<div class="a" style="left:481px;top:621px;width:80px;height:20px;border:1px solid #a9a79a;border-radius:2px;background:#f7efa0"></div>
<div class="t" style="left:487px;top:624.50px;font-size:13px;line-height:13px;font-weight:400;color:#888;letter-spacing:-0.35px;">Start</div>
<div class="a" style="left:566px;top:621px;width:80px;height:20px;border:1px solid #a9a79a;border-radius:2px;background:#f7efa0"></div>
<div class="t" style="left:572px;top:624.50px;font-size:13px;line-height:13px;font-weight:400;color:#888;letter-spacing:-0.35px;">Konec</div>
<div class="a" style="left:652px;top:621px;width:144px;height:20px;border:1px solid #a9a79a;border-radius:2px;background:#f7efa0"></div>
<div class="a" style="left:654px;top:623px;width:3px;height:2px;background:#f00"></div><div class="a" style="left:659px;top:623px;width:3px;height:2px;background:#f00"></div>
<div class="t" style="left:657px;top:624.50px;font-size:13px;line-height:13px;font-weight:400;color:#888;letter-spacing:-0.35px;">Pracoviště</div>
<svg style="left:783px;top:630px" width="9" height="5" viewBox="0 0 9 5"><path d="M0 0 H9 L4.5 4.5 Z" fill="#222"/></svg>
<svg style="left:805px;top:624px" width="20" height="16" viewBox="0 0 20 16" fill="none" stroke="#ee7440" stroke-width="3.3" stroke-linecap="round" stroke-linejoin="round"><path d="M4.5 7.5 L9 11.7 L15.5 2"/></svg>
<div class="t" style="left:296px;top:662.10px;font-size:13px;line-height:13px;font-weight:700;color:#222;letter-spacing:-0.35px;">7.12.2021</div>
<div class="t" style="left:296px;top:681.50px;font-size:13px;line-height:13px;font-weight:700;color:#666;letter-spacing:-0.35px;">Úterý</div>
<div class="t" style="right:1017.5px;top:661.70px;font-size:13px;line-height:13px;font-weight:700;color:#111;">0</div>
<div class="t" style="right:504px;top:661.70px;font-size:13px;line-height:13px;font-weight:700;color:#111;">0</div>
<div class="a" style="left:400px;top:666px;width:75px;height:20px;border:1px solid #9a9a9a;border-radius:2px;background:#ececec"></div>
<div class="a" style="left:402px;top:668px;width:3px;height:2px;background:#f00"></div><div class="a" style="left:407px;top:668px;width:3px;height:2px;background:#f00"></div>
<div class="t" style="left:405px;top:669.50px;font-size:13px;line-height:13px;font-weight:400;color:#707070;letter-spacing:-0.35px;">Směna</div>
<svg style="left:462px;top:675px" width="9" height="5" viewBox="0 0 9 5"><path d="M0 0 H9 L4.5 4.5 Z" fill="#222"/></svg>
<div class="a" style="left:481px;top:666px;width:80px;height:20px;border:1px solid #a9a79a;border-radius:2px;background:#f7efa0"></div>
<div class="t" style="left:487px;top:669.50px;font-size:13px;line-height:13px;font-weight:400;color:#888;letter-spacing:-0.35px;">Start</div>
<div class="a" style="left:566px;top:666px;width:80px;height:20px;border:1px solid #a9a79a;border-radius:2px;background:#f7efa0"></div>
<div class="t" style="left:572px;top:669.50px;font-size:13px;line-height:13px;font-weight:400;color:#888;letter-spacing:-0.35px;">Konec</div>
<div class="a" style="left:652px;top:666px;width:144px;height:20px;border:1px solid #a9a79a;border-radius:2px;background:#f7efa0"></div>
<div class="a" style="left:654px;top:668px;width:3px;height:2px;background:#f00"></div><div class="a" style="left:659px;top:668px;width:3px;height:2px;background:#f00"></div>
<div class="t" style="left:657px;top:669.50px;font-size:13px;line-height:13px;font-weight:400;color:#888;letter-spacing:-0.35px;">Pracoviště</div>
<svg style="left:783px;top:675px" width="9" height="5" viewBox="0 0 9 5"><path d="M0 0 H9 L4.5 4.5 Z" fill="#222"/></svg>
<svg style="left:805px;top:669px" width="20" height="16" viewBox="0 0 20 16" fill="none" stroke="#ee7440" stroke-width="3.3" stroke-linecap="round" stroke-linejoin="round"><path d="M4.5 7.5 L9 11.7 L15.5 2"/></svg>
<div class="t" style="left:296px;top:707.10px;font-size:13px;line-height:13px;font-weight:700;color:#222;letter-spacing:-0.35px;">8.12.2021</div>
<div class="t" style="left:296px;top:726.50px;font-size:13px;line-height:13px;font-weight:700;color:#666;letter-spacing:-0.35px;">Středa</div>
<div class="t" style="right:1017.5px;top:706.70px;font-size:13px;line-height:13px;font-weight:700;color:#111;">0</div>
<div class="t" style="right:504px;top:706.70px;font-size:13px;line-height:13px;font-weight:700;color:#111;">0</div>
<div class="a" style="left:400px;top:711px;width:75px;height:20px;border:1px solid #9a9a9a;border-radius:2px;background:#ececec"></div>
<div class="a" style="left:402px;top:713px;width:3px;height:2px;background:#f00"></div><div class="a" style="left:407px;top:713px;width:3px;height:2px;background:#f00"></div>
<div class="t" style="left:405px;top:714.50px;font-size:13px;line-height:13px;font-weight:400;color:#707070;letter-spacing:-0.35px;">Směna</div>
<svg style="left:462px;top:720px" width="9" height="5" viewBox="0 0 9 5"><path d="M0 0 H9 L4.5 4.5 Z" fill="#222"/></svg>
<div class="a" style="left:481px;top:711px;width:80px;height:20px;border:1px solid #a9a79a;border-radius:2px;background:#f7efa0"></div>
<div class="t" style="left:487px;top:714.50px;font-size:13px;line-height:13px;font-weight:400;color:#888;letter-spacing:-0.35px;">Start</div>
<div class="a" style="left:566px;top:711px;width:80px;height:20px;border:1px solid #a9a79a;border-radius:2px;background:#f7efa0"></div>
<div class="t" style="left:572px;top:714.50px;font-size:13px;line-height:13px;font-weight:400;color:#888;letter-spacing:-0.35px;">Konec</div>
<div class="a" style="left:652px;top:711px;width:144px;height:20px;border:1px solid #a9a79a;border-radius:2px;background:#f7efa0"></div>
<div class="a" style="left:654px;top:713px;width:3px;height:2px;background:#f00"></div><div class="a" style="left:659px;top:713px;width:3px;height:2px;background:#f00"></div>
<div class="t" style="left:657px;top:714.50px;font-size:13px;line-height:13px;font-weight:400;color:#888;letter-spacing:-0.35px;">Pracoviště</div>
<svg style="left:783px;top:720px" width="9" height="5" viewBox="0 0 9 5"><path d="M0 0 H9 L4.5 4.5 Z" fill="#222"/></svg>
<svg style="left:805px;top:714px" width="20" height="16" viewBox="0 0 20 16" fill="none" stroke="#ee7440" stroke-width="3.3" stroke-linecap="round" stroke-linejoin="round"><path d="M4.5 7.5 L9 11.7 L15.5 2"/></svg>
<div class="t" style="left:296px;top:752.10px;font-size:13px;line-height:13px;font-weight:700;color:#222;letter-spacing:-0.35px;">9.12.2021</div>
<div class="t" style="left:296px;top:771.50px;font-size:13px;line-height:13px;font-weight:700;color:#666;letter-spacing:-0.35px;">Čtvrtek</div>
<div class="t" style="right:1017.5px;top:751.70px;font-size:13px;line-height:13px;font-weight:700;color:#111;">0</div>
<div class="t" style="right:504px;top:751.70px;font-size:13px;line-height:13px;font-weight:700;color:#111;">0</div>
<div class="a" style="left:400px;top:756px;width:75px;height:20px;border:1px solid #9a9a9a;border-radius:2px;background:#ececec"></div>
<div class="a" style="left:402px;top:758px;width:3px;height:2px;background:#f00"></div><div class="a" style="left:407px;top:758px;width:3px;height:2px;background:#f00"></div>
<div class="t" style="left:405px;top:759.50px;font-size:13px;line-height:13px;font-weight:400;color:#707070;letter-spacing:-0.35px;">Směna</div>
<svg style="left:462px;top:765px" width="9" height="5" viewBox="0 0 9 5"><path d="M0 0 H9 L4.5 4.5 Z" fill="#222"/></svg>
<div class="a" style="left:481px;top:756px;width:80px;height:20px;border:1px solid #a9a79a;border-radius:2px;background:#f7efa0"></div>
<div class="t" style="left:487px;top:759.50px;font-size:13px;line-height:13px;font-weight:400;color:#888;letter-spacing:-0.35px;">Start</div>
<div class="a" style="left:566px;top:756px;width:80px;height:20px;border:1px solid #a9a79a;border-radius:2px;background:#f7efa0"></div>
<div class="t" style="left:572px;top:759.50px;font-size:13px;line-height:13px;font-weight:400;color:#888;letter-spacing:-0.35px;">Konec</div>
<div class="a" style="left:652px;top:756px;width:144px;height:20px;border:1px solid #a9a79a;border-radius:2px;background:#f7efa0"></div>
<div class="a" style="left:654px;top:758px;width:3px;height:2px;background:#f00"></div><div class="a" style="left:659px;top:758px;width:3px;height:2px;background:#f00"></div>
<div class="t" style="left:657px;top:759.50px;font-size:13px;line-height:13px;font-weight:400;color:#888;letter-spacing:-0.35px;">Pracoviště</div>
<svg style="left:783px;top:765px" width="9" height="5" viewBox="0 0 9 5"><path d="M0 0 H9 L4.5 4.5 Z" fill="#222"/></svg>
<svg style="left:805px;top:759px" width="20" height="16" viewBox="0 0 20 16" fill="none" stroke="#ee7440" stroke-width="3.3" stroke-linecap="round" stroke-linejoin="round"><path d="M4.5 7.5 L9 11.7 L15.5 2"/></svg>
<div class="t" style="left:296px;top:797.10px;font-size:13px;line-height:13px;font-weight:700;color:#222;letter-spacing:-0.35px;">10.12.2021</div>
<div class="t" style="left:296px;top:816.50px;font-size:13px;line-height:13px;font-weight:700;color:#666;letter-spacing:-0.35px;">Pátek</div>
<div class="t" style="right:1017.5px;top:796.70px;font-size:13px;line-height:13px;font-weight:700;color:#111;">0</div>
<div class="t" style="right:504px;top:796.70px;font-size:13px;line-height:13px;font-weight:700;color:#111;">0</div>
<div class="a" style="left:400px;top:801px;width:75px;height:20px;border:1px solid #9a9a9a;border-radius:2px;background:#ececec"></div>
<div class="a" style="left:402px;top:803px;width:3px;height:2px;background:#f00"></div><div class="a" style="left:407px;top:803px;width:3px;height:2px;background:#f00"></div>
<div class="t" style="left:405px;top:804.50px;font-size:13px;line-height:13px;font-weight:400;color:#707070;letter-spacing:-0.35px;">Směna</div>
<svg style="left:462px;top:810px" width="9" height="5" viewBox="0 0 9 5"><path d="M0 0 H9 L4.5 4.5 Z" fill="#222"/></svg>
<div class="a" style="left:481px;top:801px;width:80px;height:20px;border:1px solid #a9a79a;border-radius:2px;background:#f7efa0"></div>
<div class="t" style="left:487px;top:804.50px;font-size:13px;line-height:13px;font-weight:400;color:#888;letter-spacing:-0.35px;">Start</div>
<div class="a" style="left:566px;top:801px;width:80px;height:20px;border:1px solid #a9a79a;border-radius:2px;background:#f7efa0"></div>
<div class="t" style="left:572px;top:804.50px;font-size:13px;line-height:13px;font-weight:400;color:#888;letter-spacing:-0.35px;">Konec</div>
<div class="a" style="left:652px;top:801px;width:144px;height:20px;border:1px solid #a9a79a;border-radius:2px;background:#f7efa0"></div>
<div class="a" style="left:654px;top:803px;width:3px;height:2px;background:#f00"></div><div class="a" style="left:659px;top:803px;width:3px;height:2px;background:#f00"></div>
<div class="t" style="left:657px;top:804.50px;font-size:13px;line-height:13px;font-weight:400;color:#888;letter-spacing:-0.35px;">Pracoviště</div>
<svg style="left:783px;top:810px" width="9" height="5" viewBox="0 0 9 5"><path d="M0 0 H9 L4.5 4.5 Z" fill="#222"/></svg>
<svg style="left:805px;top:804px" width="20" height="16" viewBox="0 0 20 16" fill="none" stroke="#ee7440" stroke-width="3.3" stroke-linecap="round" stroke-linejoin="round"><path d="M4.5 7.5 L9 11.7 L15.5 2"/></svg>
<div class="t" style="left:296px;top:842.10px;font-size:13px;line-height:13px;font-weight:700;color:#222;letter-spacing:-0.35px;">11.12.2021</div>
<div class="t" style="left:296px;top:861.50px;font-size:13px;line-height:13px;font-weight:700;color:#666;letter-spacing:-0.35px;">Sobota</div>
<div class="t" style="right:1017.5px;top:841.70px;font-size:13px;line-height:13px;font-weight:700;color:#111;">0</div>
<div class="t" style="right:504px;top:841.70px;font-size:13px;line-height:13px;font-weight:700;color:#111;">0</div>
<div class="t" style="left:296px;top:887.10px;font-size:13px;line-height:13px;font-weight:700;color:#222;letter-spacing:-0.35px;">12.12.2021</div>
<div class="t" style="left:296px;top:906.50px;font-size:13px;line-height:13px;font-weight:700;color:#666;letter-spacing:-0.35px;">Neděle</div>
<div class="t" style="right:1017.5px;top:886.70px;font-size:13px;line-height:13px;font-weight:700;color:#111;">0</div>
<div class="t" style="right:504px;top:886.70px;font-size:13px;line-height:13px;font-weight:700;color:#111;">0</div>
<div class="t" style="left:296px;top:932.10px;font-size:13px;line-height:13px;font-weight:700;color:#222;letter-spacing:-0.35px;">13.12.2021</div>
<div class="t" style="left:296px;top:951.50px;font-size:13px;line-height:13px;font-weight:700;color:#666;letter-spacing:-0.35px;">Pondělí</div>
<div class="t" style="right:1017.5px;top:931.70px;font-size:13px;line-height:13px;font-weight:700;color:#111;">0</div>
<div class="t" style="right:504px;top:931.70px;font-size:13px;line-height:13px;font-weight:700;color:#111;">0</div>
<div class="a" style="left:400px;top:936px;width:75px;height:20px;border:1px solid #9a9a9a;border-radius:2px;background:#ececec"></div>
<div class="a" style="left:402px;top:938px;width:3px;height:2px;background:#f00"></div><div class="a" style="left:407px;top:938px;width:3px;height:2px;background:#f00"></div>
<div class="t" style="left:405px;top:939.50px;font-size:13px;line-height:13px;font-weight:400;color:#707070;letter-spacing:-0.35px;">Směna</div>
<svg style="left:462px;top:945px" width="9" height="5" viewBox="0 0 9 5"><path d="M0 0 H9 L4.5 4.5 Z" fill="#222"/></svg>
<div class="a" style="left:481px;top:936px;width:80px;height:20px;border:1px solid #a9a79a;border-radius:2px;background:#f7efa0"></div>
<div class="t" style="left:487px;top:939.50px;font-size:13px;line-height:13px;font-weight:400;color:#888;letter-spacing:-0.35px;">Start</div>
<div class="a" style="left:566px;top:936px;width:80px;height:20px;border:1px solid #a9a79a;border-radius:2px;background:#f7efa0"></div>
<div class="t" style="left:572px;top:939.50px;font-size:13px;line-height:13px;font-weight:400;color:#888;letter-spacing:-0.35px;">Konec</div>
<div class="a" style="left:652px;top:936px;width:144px;height:20px;border:1px solid #a9a79a;border-radius:2px;background:#f7efa0"></div>
<div class="a" style="left:654px;top:938px;width:3px;height:2px;background:#f00"></div><div class="a" style="left:659px;top:938px;width:3px;height:2px;background:#f00"></div>
<div class="t" style="left:657px;top:939.50px;font-size:13px;line-height:13px;font-weight:400;color:#888;letter-spacing:-0.35px;">Pracoviště</div>
<svg style="left:783px;top:945px" width="9" height="5" viewBox="0 0 9 5"><path d="M0 0 H9 L4.5 4.5 Z" fill="#222"/></svg>
<svg style="left:805px;top:939px" width="20" height="16" viewBox="0 0 20 16" fill="none" stroke="#ee7440" stroke-width="3.3" stroke-linecap="round" stroke-linejoin="round"><path d="M4.5 7.5 L9 11.7 L15.5 2"/></svg>
<div class="t" style="left:296px;top:977.10px;font-size:13px;line-height:13px;font-weight:700;color:#222;letter-spacing:-0.35px;">14.12.2021</div>
<div class="t" style="left:296px;top:996.50px;font-size:13px;line-height:13px;font-weight:700;color:#666;letter-spacing:-0.35px;">Úterý</div>
<div class="t" style="right:1017.5px;top:976.70px;font-size:13px;line-height:13px;font-weight:700;color:#111;">0</div>
<div class="t" style="right:504px;top:976.70px;font-size:13px;line-height:13px;font-weight:700;color:#111;">0</div>
<div class="a" style="left:400px;top:981px;width:75px;height:20px;border:1px solid #9a9a9a;border-radius:2px;background:#ececec"></div>
<div class="a" style="left:402px;top:983px;width:3px;height:2px;background:#f00"></div><div class="a" style="left:407px;top:983px;width:3px;height:2px;background:#f00"></div>
<div class="t" style="left:405px;top:984.50px;font-size:13px;line-height:13px;font-weight:400;color:#707070;letter-spacing:-0.35px;">Směna</div>
<svg style="left:462px;top:990px" width="9" height="5" viewBox="0 0 9 5"><path d="M0 0 H9 L4.5 4.5 Z" fill="#222"/></svg>
<div class="a" style="left:481px;top:981px;width:80px;height:20px;border:1px solid #a9a79a;border-radius:2px;background:#f7efa0"></div>
<div class="t" style="left:487px;top:984.50px;font-size:13px;line-height:13px;font-weight:400;color:#888;letter-spacing:-0.35px;">Start</div>
<div class="a" style="left:566px;top:981px;width:80px;height:20px;border:1px solid #a9a79a;border-radius:2px;background:#f7efa0"></div>
<div class="t" style="left:572px;top:984.50px;font-size:13px;line-height:13px;font-weight:400;color:#888;letter-spacing:-0.35px;">Konec</div>
<div class="a" style="left:652px;top:981px;width:144px;height:20px;border:1px solid #a9a79a;border-radius:2px;background:#f7efa0"></div>
<div class="a" style="left:654px;top:983px;width:3px;height:2px;background:#f00"></div><div class="a" style="left:659px;top:983px;width:3px;height:2px;background:#f00"></div>
<div class="t" style="left:657px;top:984.50px;font-size:13px;line-height:13px;font-weight:400;color:#888;letter-spacing:-0.35px;">Pracoviště</div>
<svg style="left:783px;top:990px" width="9" height="5" viewBox="0 0 9 5"><path d="M0 0 H9 L4.5 4.5 Z" fill="#222"/></svg>
<svg style="left:805px;top:984px" width="20" height="16" viewBox="0 0 20 16" fill="none" stroke="#ee7440" stroke-width="3.3" stroke-linecap="round" stroke-linejoin="round"><path d="M4.5 7.5 L9 11.7 L15.5 2"/></svg>
<div class="t" style="left:296px;top:1022.10px;font-size:13px;line-height:13px;font-weight:700;color:#222;letter-spacing:-0.35px;">15.12.2021</div>
<div class="t" style="left:296px;top:1041.50px;font-size:13px;line-height:13px;font-weight:700;color:#666;letter-spacing:-0.35px;">Středa</div>
<div class="t" style="right:1017.5px;top:1021.70px;font-size:13px;line-height:13px;font-weight:700;color:#111;">0</div>
<div class="t" style="right:504px;top:1021.70px;font-size:13px;line-height:13px;font-weight:700;color:#111;">0</div>
<div class="a" style="left:400px;top:1026px;width:75px;height:20px;border:1px solid #9a9a9a;border-radius:2px;background:#ececec"></div>
<div class="a" style="left:402px;top:1028px;width:3px;height:2px;background:#f00"></div><div class="a" style="left:407px;top:1028px;width:3px;height:2px;background:#f00"></div>
<div class="t" style="left:405px;top:1029.50px;font-size:13px;line-height:13px;font-weight:400;color:#707070;letter-spacing:-0.35px;">Směna</div>
<svg style="left:462px;top:1035px" width="9" height="5" viewBox="0 0 9 5"><path d="M0 0 H9 L4.5 4.5 Z" fill="#222"/></svg>
<div class="a" style="left:481px;top:1026px;width:80px;height:20px;border:1px solid #a9a79a;border-radius:2px;background:#f7efa0"></div>
<div class="t" style="left:487px;top:1029.50px;font-size:13px;line-height:13px;font-weight:400;color:#888;letter-spacing:-0.35px;">Start</div>
<div class="a" style="left:566px;top:1026px;width:80px;height:20px;border:1px solid #a9a79a;border-radius:2px;background:#f7efa0"></div>
<div class="t" style="left:572px;top:1029.50px;font-size:13px;line-height:13px;font-weight:400;color:#888;letter-spacing:-0.35px;">Konec</div>
<div class="a" style="left:652px;top:1026px;width:144px;height:20px;border:1px solid #a9a79a;border-radius:2px;background:#f7efa0"></div>
<div class="a" style="left:654px;top:1028px;width:3px;height:2px;background:#f00"></div><div class="a" style="left:659px;top:1028px;width:3px;height:2px;background:#f00"></div>
<div class="t" style="left:657px;top:1029.50px;font-size:13px;line-height:13px;font-weight:400;color:#888;letter-spacing:-0.35px;">Pracoviště</div>
<svg style="left:783px;top:1035px" width="9" height="5" viewBox="0 0 9 5"><path d="M0 0 H9 L4.5 4.5 Z" fill="#222"/></svg>
<svg style="left:805px;top:1029px" width="20" height="16" viewBox="0 0 20 16" fill="none" stroke="#ee7440" stroke-width="3.3" stroke-linecap="round" stroke-linejoin="round"><path d="M4.5 7.5 L9 11.7 L15.5 2"/></svg>
<div class="t" style="left:296px;top:1067.10px;font-size:13px;line-height:13px;font-weight:700;color:#222;letter-spacing:-0.35px;">16.12.2021</div>
<div class="t" style="left:296px;top:1086.50px;font-size:13px;line-height:13px;font-weight:700;color:#666;letter-spacing:-0.35px;">Čtvrtek</div>
<div class="t" style="right:1017.5px;top:1066.70px;font-size:13px;line-height:13px;font-weight:700;color:#111;">0</div>
<div class="t" style="right:504px;top:1066.70px;font-size:13px;line-height:13px;font-weight:700;color:#111;">0</div>
<div class="a" style="left:400px;top:1071px;width:75px;height:20px;border:1px solid #9a9a9a;border-radius:2px;background:#ececec"></div>
<div class="a" style="left:402px;top:1073px;width:3px;height:2px;background:#f00"></div><div class="a" style="left:407px;top:1073px;width:3px;height:2px;background:#f00"></div>
<div class="t" style="left:405px;top:1074.50px;font-size:13px;line-height:13px;font-weight:400;color:#707070;letter-spacing:-0.35px;">Směna</div>
<svg style="left:462px;top:1080px" width="9" height="5" viewBox="0 0 9 5"><path d="M0 0 H9 L4.5 4.5 Z" fill="#222"/></svg>
<div class="a" style="left:481px;top:1071px;width:80px;height:20px;border:1px solid #a9a79a;border-radius:2px;background:#f7efa0"></div>
<div class="t" style="left:487px;top:1074.50px;font-size:13px;line-height:13px;font-weight:400;color:#888;letter-spacing:-0.35px;">Start</div>
<div class="a" style="left:566px;top:1071px;width:80px;height:20px;border:1px solid #a9a79a;border-radius:2px;background:#f7efa0"></div>
<div class="t" style="left:572px;top:1074.50px;font-size:13px;line-height:13px;font-weight:400;color:#888;letter-spacing:-0.35px;">Konec</div>
<div class="a" style="left:652px;top:1071px;width:144px;height:20px;border:1px solid #a9a79a;border-radius:2px;background:#f7efa0"></div>
<div class="a" style="left:654px;top:1073px;width:3px;height:2px;background:#f00"></div><div class="a" style="left:659px;top:1073px;width:3px;height:2px;background:#f00"></div>
<div class="t" style="left:657px;top:1074.50px;font-size:13px;line-height:13px;font-weight:400;color:#888;letter-spacing:-0.35px;">Pracoviště</div>
<svg style="left:783px;top:1080px" width="9" height="5" viewBox="0 0 9 5"><path d="M0 0 H9 L4.5 4.5 Z" fill="#222"/></svg>
<svg style="left:805px;top:1074px" width="20" height="16" viewBox="0 0 20 16" fill="none" stroke="#ee7440" stroke-width="3.3" stroke-linecap="round" stroke-linejoin="round"><path d="M4.5 7.5 L9 11.7 L15.5 2"/></svg>
<div class="a" style="left:262px;top:1067px;width:1658px;height:13px;background:#f0f0f0"></div>
<svg style="left:266px;top:1070px" width="5" height="7" viewBox="0 0 5 7"><path d="M4.5 0 V7 L0.5 3.5 Z" fill="#a3a3a3"/></svg>
<svg style="left:1898px;top:1070px" width="5" height="7" viewBox="0 0 5 7"><path d="M0.5 0 V7 L4.5 3.5 Z" fill="#a3a3a3"/></svg>
<div class="a" style="left:1907px;top:187px;width:13px;height:880px;background:#f0f0f0"></div>
<div class="a" style="left:1909px;top:199px;width:9px;height:339px;background:#c1c1c1"></div>
<svg style="left:1910px;top:191px" width="7" height="5" viewBox="0 0 7 5"><path d="M0 4.5 H7 L3.5 0.5 Z" fill="#a3a3a3"/></svg>
<svg style="left:1910px;top:1058px" width="7" height="5" viewBox="0 0 7 5"><path d="M0 0.5 H7 L3.5 4.5 Z" fill="#505050"/></svg>
<div class="a" style="left:1907px;top:1067px;width:13px;height:13px;background:#dcdcdc"></div>
<svg style="left:0;top:0" width="1920" height="1080"><path d="M823 421 L960 584" stroke="#000" stroke-width="2.2"/></svg>
<div class="a" style="left:959px;top:583px;width:313px;height:136px;border:2.5px solid #000;background:#ffcb33"></div>
<div class="t" style="left:1115.5px;top:592.41px;font-size:32px;line-height:32px;font-weight:400;color:#000;letter-spacing:0.75px;transform:translateX(-50%);">Druhou přítomnost</div>
<div class="t" style="left:1115.5px;top:634.41px;font-size:32px;line-height:32px;font-weight:400;color:#000;letter-spacing:0.75px;transform:translateX(-50%);">opět potvrdíte</div>
<div class="t" style="left:1115.5px;top:677.91px;font-size:32px;line-height:32px;font-weight:400;color:#000;letter-spacing:0.75px;transform:translateX(-50%);">tlačítkem</div>
</body></html>
